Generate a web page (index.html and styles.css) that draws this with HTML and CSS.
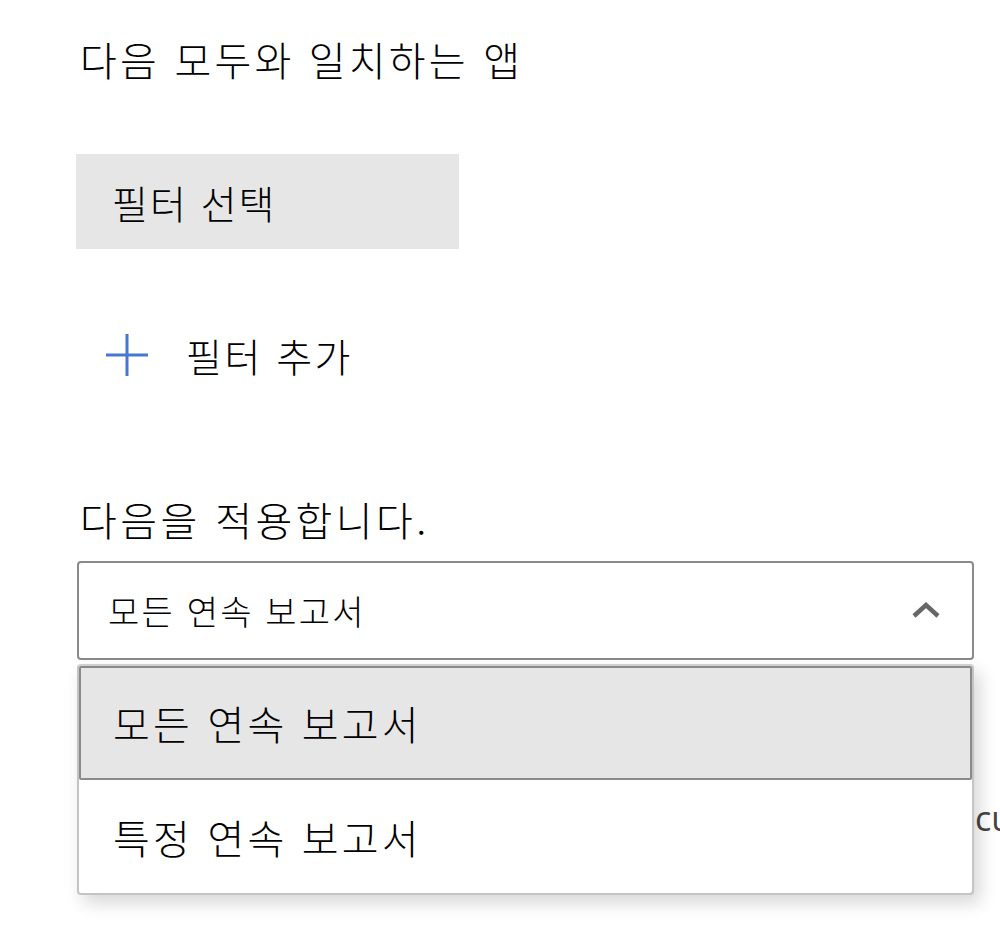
FILE: index.html
```html
<!DOCTYPE html>
<html lang="ko">
<head>
<meta charset="utf-8">
<link rel="stylesheet" href="styles.css">
</head>
<body>
<main class="page">
  <h1 class="title">다음 모두와 일치하는 앱</h1>
  <div class="filter-select">필터 선택</div>
  <div class="add-filter">
    <svg class="plus" width="42" height="42" viewBox="0 0 42 42"><path d="M21 0V42M0 21H42" stroke="#4677d4" stroke-width="3" fill="none"/></svg>
    <span>필터 추가</span>
  </div>
  <div class="apply-label">다음을 적용합니다.</div>
  <div class="select-wrap">
    <div class="select">
      <span>모든 연속 보고서</span>
      <svg class="chev" width="30" height="18" viewBox="0 0 30 18"><polyline points="3,15 15,4 27,15" stroke="#666" stroke-width="4.5" fill="none"/></svg>
    </div>
    <div class="behind">cu</div>
    <ul class="dropdown">
      <li class="opt selected">모든 연속 보고서</li>
      <li class="opt">특정 연속 보고서</li>
    </ul>
  </div>
</main>
</body>
</html>
```
FILE: styles.css
```css
html {
  overflow: hidden;
  background: #fff;
}
body {
  margin: 0;
  padding: 0;
  min-height: 938px;
  font-family: "Noto Sans CJK KR", "Noto Sans", sans-serif;
  font-weight: 300;
  color: #000;
}
.page {
  padding: 32px 0 0 76px;
  width: 924px;
}
.title {
  margin: 0 0 0 4px;
  font-size: 40px;
  font-weight: 300;
  letter-spacing: 3.2px;
  line-height: 54px;
}
.filter-select {
  margin-top: 68px;
  width: 347px;
  height: 95px;
  padding-left: 36px;
  background: #e6e6e6;
  font-size: 39px;
  letter-spacing: 2px;
  display: flex;
  align-items: center;
}
.add-filter {
  margin-top: 85px;
  margin-left: 30px;
  display: flex;
  align-items: center;
  gap: 38px;
  font-size: 39px;
  letter-spacing: 2.5px;
  height: 42px;
}
.apply-label {
  margin-top: 116px;
  margin-left: 4px;
  font-size: 40px;
  letter-spacing: 3.4px;
  line-height: 54px;
}
.select-wrap {
  position: relative;
  margin-top: 15px;
  margin-left: 1px;
}
.select {
  box-sizing: border-box;
  width: 897px;
  height: 99px;
  border: 2px solid #8a8a8a;
  border-radius: 4px;
  display: flex;
  align-items: center;
  justify-content: space-between;
  padding: 0 31px 0 29px;
  font-size: 34px;
  letter-spacing: 2.2px;
}
.chev {
  margin-top: -2px;
}
.behind {
  margin-top: 138px;
  margin-left: 898px;
  font-family: "Open Sans", sans-serif;
  font-weight: 400;
  font-size: 34px;
  line-height: 40px;
  color: #444;
  white-space: nowrap;
}
.dropdown {
  position: absolute;
  top: 103px;
  left: 0;
  box-sizing: border-box;
  width: 897px;
  margin: 0;
  padding: 0;
  list-style: none;
  background: #fff;
  border: 2px solid #c4c4c4;
  border-top-color: #d0d0d0;
  border-radius: 4px;
  box-shadow: 6px 8px 18px rgba(0, 0, 0, 0.16);
}
.opt {
  box-sizing: border-box;
  height: 113px;
  display: flex;
  align-items: center;
  padding-left: 34px;
  font-size: 40px;
  letter-spacing: 3.2px;
}
.opt.selected {
  background: #e6e6e6;
  border: 2px solid #8a8a8a;
  border-radius: 2px;
  padding-left: 32px;
  height: 114px;
}
```
